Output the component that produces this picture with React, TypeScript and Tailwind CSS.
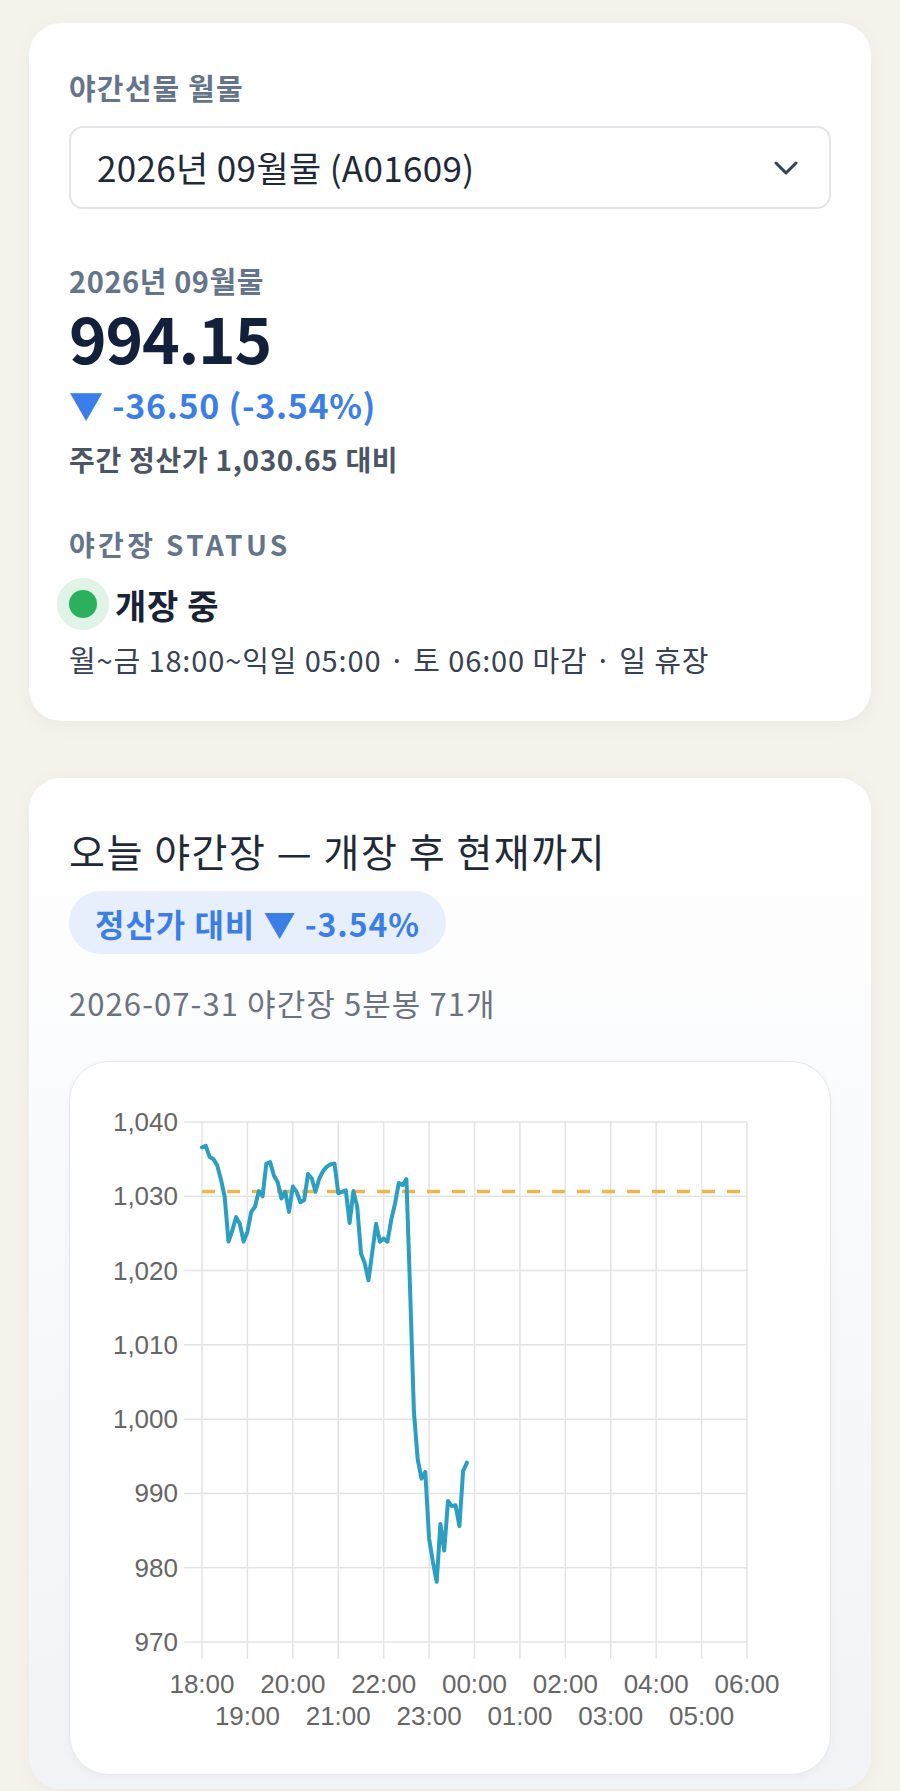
import React from 'react';

const font = { fontFamily: '"Noto Sans CJK KR", "Noto Sans", sans-serif' };

// 5분봉 종가 (18:00 ~ 23:50, 71개)
const closes = [
  1036.6, 1036.8, 1035.3, 1035.0, 1034.2, 1032.3, 1029.9, 1023.9, 1025.4, 1027.2,
  1026.3, 1023.9, 1025.2, 1027.9, 1028.6, 1030.7, 1030.0, 1034.4, 1034.6, 1032.8,
  1031.9, 1029.7, 1030.6, 1027.9, 1031.3, 1030.6, 1029.2, 1029.5, 1033.0, 1032.4,
  1030.6, 1032.4, 1033.4, 1034.0, 1034.3, 1034.4, 1030.4, 1030.6, 1030.8, 1026.4,
  1030.7, 1028.6, 1022.3, 1021.0, 1018.7, 1022.5, 1026.3, 1023.9, 1024.3, 1023.9,
  1026.8, 1029.0, 1031.8, 1031.5, 1032.3, 1017.0, 1001.0, 994.6, 992.0, 992.9,
  983.9, 980.8, 978.1, 985.9, 982.3, 989.0, 988.3, 988.4, 985.6, 993.0, 994.15,
];

const SETTLE = 1030.65;
const plotL = 132;
const plotR = 677;
const plotT = 60;
const plotB = 580;
const hourW = (plotR - plotL) / 12;
const tenH = (plotB - plotT) / 7;

const yOf = (v: number) => plotT + ((1040 - v) / 10) * tenH;
const xOf = (i: number) => plotL + (i * hourW) / 12;

const yTicks = [1040, 1030, 1020, 1010, 1000, 990, 980, 970];
const hours = ['18:00', '19:00', '20:00', '21:00', '22:00', '23:00', '00:00', '01:00', '02:00', '03:00', '04:00', '05:00', '06:00'];

const NightChart: React.FC = () => {
  const path = closes.map((v, i) => `${i === 0 ? 'M' : 'L'}${xOf(i).toFixed(1)},${yOf(v).toFixed(1)}`).join(' ');
  return (
    <svg width="757" height="712" viewBox="0 0 757 712" style={{ fontFamily: '"Liberation Sans", Arial, sans-serif' }}>
      {/* grid */}
      {hours.map((_, i) => (
        <line key={`v${i}`} x1={plotL + i * hourW} x2={plotL + i * hourW} y1={plotT} y2={plotB + 17} stroke="#e4e4e4" strokeWidth="1.5" />
      ))}
      {yTicks.map((t, i) => (
        <line key={`h${i}`} x1={plotL - 18} x2={plotR} y1={plotT + i * tenH} y2={plotT + i * tenH} stroke="#e4e4e4" strokeWidth="1.5" />
      ))}
      {yTicks.map((t, i) => (
        <text key={`yl${i}`} x={108} y={plotT + i * tenH + 9} textAnchor="end" fontSize="26" fill="#666">
          {t.toLocaleString('en-US')}
        </text>
      ))}
      {hours.map((h, i) => (
        <text key={`xl${i}`} x={plotL + i * hourW} y={i % 2 === 0 ? 631 : 663} textAnchor="middle" fontSize="26" fill="#666">
          {h}
        </text>
      ))}
      {/* 정산가 기준선 */}
      <line x1={plotL} x2={plotR} y1={yOf(SETTLE)} y2={yOf(SETTLE)} stroke="#f0b54c" strokeWidth="3.5" strokeDasharray="13 12" />
      <path d={path} fill="none" stroke="#2a9fc1" strokeWidth="4" strokeLinejoin="round" strokeLinecap="round" />
    </svg>
  );
};

export default function App() {
  return (
    <div className="min-h-screen bg-[#f5f2ec] px-[29px] pt-[23px]" style={font}>
      {/* 월물 / 현재가 카드 */}
      <div className="bg-white rounded-[32px] shadow-[0_4px_18px_rgba(120,100,70,0.06)] px-[40px] pt-[44px] pb-[42px]">
        <div className="text-[29px] leading-[40px] font-semibold tracking-[0.04em] text-[#64748b]">야간선물 월물</div>
        <div className="mt-[19px] h-[83px] rounded-[14px] border-2 border-[#e3e5ea] flex items-center justify-between pl-[26px] pr-[31px]">
          <span className="text-[35px] tracking-[0.01em] text-[#1f2937]">2026년 09월물 (A01609)</span>
          <svg width="24" height="14" viewBox="0 0 24 14" fill="none">
            <path d="M2 2l10 10L22 2" stroke="#374151" strokeWidth="3" strokeLinecap="round" strokeLinejoin="round" />
          </svg>
        </div>

        <div className="mt-[51px] text-[29px] leading-[40px] font-semibold tracking-[0.02em] text-[#64748b]">2026년 09월물</div>
        <div className="text-[64px] leading-[72px] font-bold tracking-[-0.02em] text-[#13203b]">994.15</div>
        <div className="mt-[11px] text-[34px] leading-[44px] font-bold tracking-[0.02em] text-[#3b7ee8]">▼ -36.50 (-3.54%)</div>
        <div className="mt-[12px] text-[28px] leading-[40px] font-semibold tracking-[0.025em] text-[#4b5563]">주간 정산가 1,030.65 대비</div>

        <div className="mt-[45px] text-[28px] leading-[40px] font-semibold tracking-[0.12em] text-[#64748b]">야간장 STATUS</div>
        <div className="mt-[14px] h-[52px] flex items-center">
          <div className="w-[28px] h-[28px] rounded-full bg-[#2bb05c] shadow-[0_0_0_12px_#dff3e6]" />
          <span className="ml-[18px] text-[34px] font-bold tracking-[0.02em] text-[#1a2238]">개장 중</span>
        </div>
        <div className="mt-[9px] text-[29px] leading-[40px] tracking-[0.03em] text-[#374151]">월~금 18:00~익일 05:00 · 토 06:00 마감 · 일 휴장</div>
      </div>

      {/* 오늘 야간장 차트 카드 */}
      <div className="mt-[57px] rounded-[32px] bg-gradient-to-b from-white to-[#f1f3f7] shadow-[0_4px_18px_rgba(120,100,70,0.06)] px-[40px] pt-[48px] pb-[14px]">
        <div className="text-[39px] leading-[48px] font-normal tracking-[0.04em] text-[#1f2937]">오늘 야간장 — 개장 후 현재까지</div>
        <div className="mt-[17px] inline-flex items-center h-[63px] px-[26px] rounded-full bg-[#e7effd] text-[32px] font-bold tracking-[0.03em] text-[#3b7ee8]">
          정산가 대비 ▼ -3.54%
        </div>
        <div className="mt-[29px] text-[31px] leading-[40px] tracking-[0.035em] text-[#6b7280]">2026-07-31 야간장 5분봉 71개</div>
        <div className="mt-[38px] h-[714px] rounded-[40px] border border-[#e6e8ee] bg-white shadow-[0_2px_10px_rgba(30,40,60,0.04)] overflow-hidden">
          <NightChart />
        </div>
      </div>
    </div>
  );
}
